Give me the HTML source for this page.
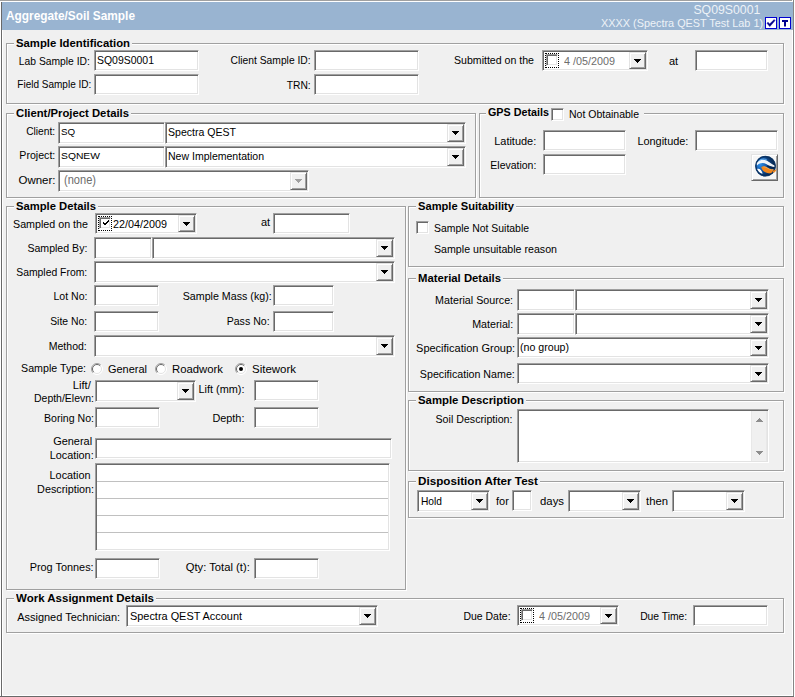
<!DOCTYPE html>
<html><head><meta charset="utf-8"><title>Aggregate/Soil Sample</title>
<style>
html,body{margin:0;padding:0}
body{width:795px;height:697px;position:relative;overflow:hidden;background:#f0f0f0;font-family:"Liberation Sans",Arial,sans-serif;font-size:11px;color:#000}
div,span,svg{position:absolute;box-sizing:border-box}
span{white-space:nowrap;line-height:13px}
.t{font-size:11px}
.b{font-size:11px;font-weight:bold}
.g{font-size:11px;color:#6d6d6d}
.v{font-size:11px}
.s{font-size:9.8px;line-height:12px}
.gt{font-size:12px;color:#6d6d6d}
.vt{font-size:11.5px}
.h1{font-size:12.5px;font-weight:bold;color:#fff;line-height:16px}
.h2{font-size:12px;color:#edf2f7;line-height:14px}
.h3{font-size:11px;color:#edf2f7;line-height:13px}
.gg{border:1px solid #a0a0a0}
.gw{border:1px solid #fff}
.tb{background:#fff;border:1px solid;border-color:#a0a0a0 #fff #fff #a0a0a0;box-shadow:inset 1px 1px 0 #696969,inset -1px -1px 0 #e3e3e3}
.bt{background:#f0f0f0;border:1px solid;border-color:#e3e3e3 #696969 #696969 #e3e3e3;box-shadow:inset 1px 1px 0 #fff,inset -1px -1px 0 #a0a0a0}
.cb{width:13px;height:13px;background:#fff;border:1px solid;border-color:#a0a0a0 #fff #fff #a0a0a0;box-shadow:inset 1px 1px 0 #696969,inset -1px -1px 0 #e3e3e3}

</style></head>
<body>
<div style="left:0px;top:0px;width:792px;height:1px;background:#a0a0a0"></div>
<div style="left:0px;top:1px;width:793px;height:1px;background:#fff"></div>
<div style="left:0px;top:1px;width:1px;height:696px;background:#fff"></div>
<div style="left:1px;top:2px;width:1px;height:695px;background:#696969"></div>
<div style="left:2px;top:30px;width:1px;height:666px;background:#fff"></div>
<div style="left:792px;top:0px;width:1px;height:696px;background:#fff"></div>
<div style="left:793px;top:0px;width:1px;height:697px;background:#868686"></div>
<div style="left:794px;top:0px;width:1px;height:697px;background:#fff"></div>
<div style="left:2px;top:695px;width:791px;height:1px;background:#fff"></div>
<div style="left:0px;top:696px;width:794px;height:1px;background:#696969"></div>
<div style="left:2px;top:2px;width:791px;height:28px;background:#99b4d1"></div>
<span class="h1" style="left:6px;top:8px;transform:scaleX(0.9474);transform-origin:left top;">Aggregate/Soil Sample</span>
<span class="h2" style="right:35px;top:3px;transform:scaleX(1.0246);transform-origin:right top;">SQ09S0001</span>
<span class="h3" style="right:32px;top:17px;transform:scaleX(0.9874);transform-origin:right top;">XXXX (Spectra QEST Test Lab 1)</span>
<svg style="left:765px;top:17px" width="12" height="12" viewBox="0 0 12 12"><rect x=".5" y=".5" width="11" height="11" fill="#fff" stroke="#0000d0"/><path d="M2 6.2L3 5.2L4.6 7L9.2 2.6L10 3.6L4.8 9.6z" fill="#00008c" stroke="#00008c" stroke-width=".5"/></svg>
<svg style="left:779px;top:17px" width="12" height="12" viewBox="0 0 12 12"><rect x=".5" y=".5" width="11" height="11" fill="#fff" stroke="#0000d0"/><path d="M3 3h6v2H7v4.5H5V5H3z" fill="#000090"/></svg>
<div class="gw" style="left:7px;top:44px;width:778px;height:61px"></div>
<div class="gg" style="left:6px;top:43px;width:778px;height:61px"></div>
<div style="left:14px;top:43px;width:118px;height:2px;background:#f0f0f0"></div>
<span class="b" style="left:16px;top:37px;transform:scaleX(1.0304);transform-origin:left top;">Sample Identification</span>
<span class="t" style="right:705px;top:55px;transform:scaleX(0.9363);transform-origin:right top;">Lab Sample ID:</span>
<div class="tb" style="left:94px;top:50px;width:105px;height:21px;"></div>
<span class="v" style="left:97px;top:54px;transform:scaleX(0.9510);transform-origin:left top;">SQ09S0001</span>
<span class="t" style="right:704px;top:78px;transform:scaleX(0.9101);transform-origin:right top;">Field Sample ID:</span>
<div class="tb" style="left:94px;top:74px;width:105px;height:21px;"></div>
<span class="t" style="right:484px;top:54px;transform:scaleX(0.9346);transform-origin:right top;">Client Sample ID:</span>
<div class="tb" style="left:314px;top:50px;width:105px;height:21px;"></div>
<span class="t" style="right:484px;top:79px;transform:scaleX(0.9349);transform-origin:right top;">TRN:</span>
<div class="tb" style="left:314px;top:74px;width:105px;height:21px;"></div>
<span class="t" style="left:454px;top:54px;transform:scaleX(0.9619);transform-origin:left top;">Submitted on the</span>
<div class="tb" style="left:542px;top:50px;width:106px;height:21px;"></div>
<div class="cb" style="left:546px;top:54px;width:12px;height:12px;"></div>
<div style="left:545px;top:53px;width:14px;height:15px;border:1px dotted #000"></div>
<span class="g" style="left:564px;top:55px;transform:scaleX(0.9808);transform-origin:left top;">4 /05/2009</span>
<div class="bt" style="left:629px;top:52px;width:17px;height:17px"></div>
<svg style="left:634px;top:59px" width="7" height="4" viewBox="0 0 7 4" shape-rendering="crispEdges"><path d="M0 0h7v1h-1v1h-1v1h-1v1h-1v-1h-1v-1h-1v-1h-1z" fill="#000"/></svg>
<span class="t" style="left:669px;top:55px;transform:scaleX(1.0000);transform-origin:left top;">at</span>
<div class="tb" style="left:695px;top:50px;width:73px;height:21px;"></div>
<div class="gw" style="left:7px;top:114px;width:470px;height:85px"></div>
<div class="gg" style="left:6px;top:113px;width:470px;height:85px"></div>
<div style="left:14px;top:113px;width:117px;height:2px;background:#f0f0f0"></div>
<span class="b" style="left:16px;top:107px;transform:scaleX(1.0268);transform-origin:left top;">Client/Project Details</span>
<span class="t" style="right:740px;top:125px;transform:scaleX(0.9299);transform-origin:right top;">Client:</span>
<div class="tb" style="left:58px;top:122px;width:107px;height:22px;"></div>
<span class="s" style="left:61px;top:126px;transform:scaleX(1.0000);transform-origin:left top;">SQ</span>
<div class="tb" style="left:165px;top:122px;width:301px;height:22px;"></div>
<div class="bt" style="left:447px;top:124px;width:17px;height:18px"></div>
<svg style="left:452px;top:131px" width="7" height="4" viewBox="0 0 7 4" shape-rendering="crispEdges"><path d="M0 0h7v1h-1v1h-1v1h-1v1h-1v-1h-1v-1h-1v-1h-1z" fill="#000"/></svg>
<span class="v" style="left:168px;top:126px;transform:scaleX(0.9588);transform-origin:left top;">Spectra QEST</span>
<span class="t" style="right:740px;top:149px;transform:scaleX(0.9652);transform-origin:right top;">Project:</span>
<div class="tb" style="left:58px;top:146px;width:107px;height:22px;"></div>
<span class="s" style="left:61px;top:150px;transform:scaleX(1.0536);transform-origin:left top;">SQNEW</span>
<div class="tb" style="left:165px;top:146px;width:301px;height:22px;"></div>
<div class="bt" style="left:447px;top:148px;width:17px;height:18px"></div>
<svg style="left:452px;top:155px" width="7" height="4" viewBox="0 0 7 4" shape-rendering="crispEdges"><path d="M0 0h7v1h-1v1h-1v1h-1v1h-1v-1h-1v-1h-1v-1h-1z" fill="#000"/></svg>
<span class="v" style="left:168px;top:150px;transform:scaleX(0.9573);transform-origin:left top;">New Implementation</span>
<span class="t" style="right:740px;top:174px;transform:scaleX(1.0432);transform-origin:right top;">Owner:</span>
<div class="tb" style="left:58px;top:170px;width:251px;height:22px;"></div>
<div class="bt" style="left:290px;top:172px;width:17px;height:18px"></div>
<svg style="left:295px;top:179px" width="7" height="4" viewBox="0 0 7 4" shape-rendering="crispEdges"><path d="M0 0h7v1h-1v1h-1v1h-1v1h-1v-1h-1v-1h-1v-1h-1z" fill="#a0a0a0"/></svg>
<span class="gt" style="left:64px;top:174px;transform:scaleX(0.9225);transform-origin:left top;">(none)</span>
<div class="gw" style="left:480px;top:114px;width:305px;height:85px"></div>
<div class="gg" style="left:479px;top:113px;width:305px;height:85px"></div>
<div style="left:486px;top:113px;width:158px;height:2px;background:#f0f0f0"></div>
<span class="b" style="left:488px;top:106px;transform:scaleX(0.9782);transform-origin:left top;">GPS Details</span>
<div class="cb" style="left:551px;top:108px;"></div>
<span class="t" style="left:569px;top:108px;transform:scaleX(0.9538);transform-origin:left top;">Not Obtainable</span>
<span class="t" style="right:259px;top:135px;transform:scaleX(0.9952);transform-origin:right top;">Latitude:</span>
<div class="tb" style="left:543px;top:130px;width:83px;height:21px;"></div>
<span class="t" style="right:107px;top:135px;transform:scaleX(0.9924);transform-origin:right top;">Longitude:</span>
<div class="tb" style="left:695px;top:130px;width:83px;height:21px;"></div>
<span class="t" style="right:259px;top:159px;transform:scaleX(0.9521);transform-origin:right top;">Elevation:</span>
<div class="tb" style="left:543px;top:154px;width:83px;height:21px;"></div>
<div class="bt" style="left:751px;top:154px;width:27px;height:27px;background:#f6f6f6"></div>
<svg style="left:755px;top:155px" width="22" height="22" viewBox="0 0 22 22">
<defs><radialGradient id="gl" cx="24%" cy="42%" r="70%"><stop offset="0" stop-color="#2f8fe8"/><stop offset=".4" stop-color="#145cae"/><stop offset=".75" stop-color="#0a366c"/><stop offset="1" stop-color="#06264c"/></radialGradient>
<clipPath id="gc"><circle cx="10.5" cy="11.1" r="10"/></clipPath></defs>
<circle cx="10.5" cy="11.1" r="10.2" fill="url(#gl)"/>
<g clip-path="url(#gc)">
<path d="M1 8.6C3.4 5.4 7.2 3.8 11.6 5.6C14.2 6.8 16.2 9.6 20.8 10.8L20.4 12.2C16.4 12 14 10.6 11.2 9C8 7.4 5 8 2 10.4z" fill="#fff" opacity=".93"/>
<path d="M3.4 6.2C6 4 9 3.6 11.6 4.6" fill="none" stroke="#7cc4ff" stroke-width="1.1" opacity=".75"/>
<path d="M1.6 14.2C3 13.4 4.4 13.6 5.8 15C6.8 16.2 7.2 17.4 7.6 18.8C5.4 18.2 3 16.8 1.6 14.2z" fill="#fff"/>
<path d="M6.2 12.3C7.5 10.9 9.5 11 11.5 12.2C14 13.8 17.5 15.4 21.5 14.2C21 16.8 18.5 18.6 15.6 18.5C12.6 18.3 10.2 17.4 8.4 16C7.4 15 6.6 13.8 6.2 12.3z" fill="#f0861c"/>
<path d="M8.5 12C10 11.7 11.5 12.4 13 13.4C15 14.6 18 15.2 21 14.4" fill="none" stroke="#ffb45a" stroke-width=".8"/>
<path d="M12.2 10.8C14.4 12.6 17 13.5 20.8 12.9" fill="none" stroke="#072650" stroke-width="1.5"/>
</g>
<circle cx="10.5" cy="11.1" r="9.7" fill="none" stroke="#08305e" stroke-width="1.5" opacity=".9"/>
<path d="M17 15.6C18.6 15.7 20.3 15.2 21.6 14.2C21.2 15.8 20.2 17 18.8 17.8z" fill="#f0861c"/>
</svg>
<div class="gw" style="left:7px;top:207px;width:400px;height:384px"></div>
<div class="gg" style="left:6px;top:206px;width:400px;height:384px"></div>
<div style="left:14px;top:206px;width:84px;height:2px;background:#f0f0f0"></div>
<span class="b" style="left:16px;top:200px;transform:scaleX(1.0222);transform-origin:left top;">Sample Details</span>
<span class="t" style="left:13px;top:218px;transform:scaleX(0.9732);transform-origin:left top;">Sampled on the</span>
<div class="tb" style="left:95px;top:213px;width:102px;height:21px;"></div>
<div style="left:98px;top:216px;width:14px;height:15px;border:1px dotted #000"></div>
<div class="cb" style="left:99px;top:217px;width:12px;height:12px;"></div>
<svg style="left:103px;top:220px" width="6" height="5" viewBox="0 0 6 5" shape-rendering="crispEdges" fill="#000"><rect x="0" y="2" width="1" height="2"/><rect x="1" y="3" width="1" height="2"/><rect x="2" y="3" width="1" height="2"/><rect x="3" y="2" width="1" height="2"/><rect x="4" y="1" width="1" height="2"/><rect x="5" y="0" width="1" height="2"/></svg>
<span class="v" style="left:113px;top:218px;transform:scaleX(0.9807);transform-origin:left top;">22/04/2009</span>
<div class="bt" style="left:178px;top:215px;width:17px;height:17px"></div>
<svg style="left:183px;top:222px" width="7" height="4" viewBox="0 0 7 4" shape-rendering="crispEdges"><path d="M0 0h7v1h-1v1h-1v1h-1v1h-1v-1h-1v-1h-1v-1h-1z" fill="#000"/></svg>
<span class="t" style="left:261px;top:216px;transform:scaleX(1.0000);transform-origin:left top;">at</span>
<div class="tb" style="left:273px;top:213px;width:77px;height:21px;"></div>
<span class="t" style="right:708px;top:242px;transform:scaleX(0.9619);transform-origin:right top;">Sampled By:</span>
<div class="tb" style="left:94px;top:237px;width:58px;height:22px;"></div>
<div class="tb" style="left:152px;top:237px;width:243px;height:22px;"></div>
<div class="bt" style="left:376px;top:239px;width:17px;height:18px"></div>
<svg style="left:381px;top:246px" width="7" height="4" viewBox="0 0 7 4" shape-rendering="crispEdges"><path d="M0 0h7v1h-1v1h-1v1h-1v1h-1v-1h-1v-1h-1v-1h-1z" fill="#000"/></svg>
<span class="t" style="right:708px;top:266px;transform:scaleX(0.9441);transform-origin:right top;">Sampled From:</span>
<div class="tb" style="left:94px;top:261px;width:301px;height:22px;"></div>
<div class="bt" style="left:376px;top:263px;width:17px;height:18px"></div>
<svg style="left:381px;top:270px" width="7" height="4" viewBox="0 0 7 4" shape-rendering="crispEdges"><path d="M0 0h7v1h-1v1h-1v1h-1v1h-1v-1h-1v-1h-1v-1h-1z" fill="#000"/></svg>
<span class="t" style="right:708px;top:290px;transform:scaleX(0.9586);transform-origin:right top;">Lot No:</span>
<div class="tb" style="left:94px;top:285px;width:65px;height:21px;"></div>
<span class="t" style="right:523px;top:290px;transform:scaleX(0.9705);transform-origin:right top;">Sample Mass (kg):</span>
<div class="tb" style="left:273px;top:285px;width:61px;height:21px;"></div>
<span class="t" style="right:708px;top:315px;transform:scaleX(0.9453);transform-origin:right top;">Site No:</span>
<div class="tb" style="left:94px;top:311px;width:65px;height:21px;"></div>
<span class="t" style="right:525px;top:315px;transform:scaleX(0.9632);transform-origin:right top;">Pass No:</span>
<div class="tb" style="left:273px;top:311px;width:61px;height:21px;"></div>
<span class="t" style="right:708px;top:340px;transform:scaleX(0.9560);transform-origin:right top;">Method:</span>
<div class="tb" style="left:94px;top:335px;width:301px;height:22px;"></div>
<div class="bt" style="left:376px;top:337px;width:17px;height:18px"></div>
<svg style="left:381px;top:344px" width="7" height="4" viewBox="0 0 7 4" shape-rendering="crispEdges"><path d="M0 0h7v1h-1v1h-1v1h-1v1h-1v-1h-1v-1h-1v-1h-1z" fill="#000"/></svg>
<span class="t" style="right:709px;top:362px;transform:scaleX(0.9692);transform-origin:right top;">Sample Type:</span>
<svg class="rd" style="left:91px;top:363px" width="12" height="12" viewBox="0 0 12 12"><circle cx="6" cy="6" r="5.5" fill="#fff"/><path d="M2.1 9.9A5.5 5.5 0 0 1 9.9 2.1" fill="none" stroke="#a0a0a0" stroke-width="1"/><path d="M2.8 9.2A4.5 4.5 0 0 1 9.2 2.8" fill="none" stroke="#696969" stroke-width="1"/><path d="M9.9 2.1A5.5 5.5 0 0 1 2.1 9.9" fill="none" stroke="#fff" stroke-width="1"/><path d="M9.2 2.8A4.5 4.5 0 0 1 2.8 9.2" fill="none" stroke="#e3e3e3" stroke-width="1"/></svg>
<span class="t" style="left:108px;top:363px;transform:scaleX(0.9964);transform-origin:left top;">General</span>
<svg class="rd" style="left:155px;top:363px" width="12" height="12" viewBox="0 0 12 12"><circle cx="6" cy="6" r="5.5" fill="#fff"/><path d="M2.1 9.9A5.5 5.5 0 0 1 9.9 2.1" fill="none" stroke="#a0a0a0" stroke-width="1"/><path d="M2.8 9.2A4.5 4.5 0 0 1 9.2 2.8" fill="none" stroke="#696969" stroke-width="1"/><path d="M9.9 2.1A5.5 5.5 0 0 1 2.1 9.9" fill="none" stroke="#fff" stroke-width="1"/><path d="M9.2 2.8A4.5 4.5 0 0 1 2.8 9.2" fill="none" stroke="#e3e3e3" stroke-width="1"/></svg>
<span class="t" style="left:172px;top:363px;transform:scaleX(1.0297);transform-origin:left top;">Roadwork</span>
<svg class="rd" style="left:235px;top:363px" width="12" height="12" viewBox="0 0 12 12"><circle cx="6" cy="6" r="5.5" fill="#fff"/><path d="M2.1 9.9A5.5 5.5 0 0 1 9.9 2.1" fill="none" stroke="#a0a0a0" stroke-width="1"/><path d="M2.8 9.2A4.5 4.5 0 0 1 9.2 2.8" fill="none" stroke="#696969" stroke-width="1"/><path d="M9.9 2.1A5.5 5.5 0 0 1 2.1 9.9" fill="none" stroke="#fff" stroke-width="1"/><path d="M9.2 2.8A4.5 4.5 0 0 1 2.8 9.2" fill="none" stroke="#e3e3e3" stroke-width="1"/><circle cx="6" cy="6" r="2" fill="#000"/></svg>
<span class="t" style="left:252px;top:363px;transform:scaleX(1.0430);transform-origin:left top;">Sitework</span>
<span class="t" style="right:704px;top:379px;transform:scaleX(1.0150);transform-origin:right top;">Lift/</span>
<span class="t" style="right:701px;top:392px;transform:scaleX(0.9526);transform-origin:right top;">Depth/Elevn:</span>
<div class="tb" style="left:95px;top:380px;width:101px;height:22px;"></div>
<div class="bt" style="left:177px;top:382px;width:17px;height:18px"></div>
<svg style="left:182px;top:389px" width="7" height="4" viewBox="0 0 7 4" shape-rendering="crispEdges"><path d="M0 0h7v1h-1v1h-1v1h-1v1h-1v-1h-1v-1h-1v-1h-1z" fill="#000"/></svg>
<span class="t" style="right:551px;top:383px;transform:scaleX(0.9902);transform-origin:right top;">Lift (mm):</span>
<div class="tb" style="left:254px;top:380px;width:65px;height:21px;"></div>
<span class="t" style="right:701px;top:412px;transform:scaleX(0.9618);transform-origin:right top;">Boring No:</span>
<div class="tb" style="left:95px;top:407px;width:65px;height:21px;"></div>
<span class="t" style="right:551px;top:412px;transform:scaleX(0.9870);transform-origin:right top;">Depth:</span>
<div class="tb" style="left:254px;top:407px;width:65px;height:21px;"></div>
<span class="t" style="right:703px;top:435px;transform:scaleX(0.9964);transform-origin:right top;">General</span>
<span class="t" style="right:701px;top:449px;transform:scaleX(0.9853);transform-origin:right top;">Location:</span>
<div class="tb" style="left:95px;top:438px;width:297px;height:21px;"></div>
<span class="t" style="right:704px;top:469px;transform:scaleX(0.9857);transform-origin:right top;">Location</span>
<span class="t" style="right:701px;top:483px;transform:scaleX(0.9814);transform-origin:right top;">Description:</span>
<div class="tb" style="left:95px;top:463px;width:295px;height:88px;"></div>
<div style="left:97px;top:481px;width:291px;height:1px;background:#c0c0c0"></div>
<div style="left:97px;top:498px;width:291px;height:1px;background:#c0c0c0"></div>
<div style="left:97px;top:515px;width:291px;height:1px;background:#c0c0c0"></div>
<div style="left:97px;top:532px;width:291px;height:1px;background:#c0c0c0"></div>
<span class="t" style="right:701px;top:561px;transform:scaleX(0.9903);transform-origin:right top;">Prog Tonnes:</span>
<div class="tb" style="left:95px;top:558px;width:65px;height:21px;"></div>
<span class="t" style="right:545px;top:561px;transform:scaleX(1.0197);transform-origin:right top;">Qty: Total (t):</span>
<div class="tb" style="left:254px;top:558px;width:65px;height:21px;"></div>
<div class="gw" style="left:409px;top:207px;width:376px;height:61px"></div>
<div class="gg" style="left:408px;top:206px;width:376px;height:61px"></div>
<div style="left:416px;top:206px;width:100px;height:2px;background:#f0f0f0"></div>
<span class="b" style="left:418px;top:200px;transform:scaleX(1.0132);transform-origin:left top;">Sample Suitability</span>
<div class="cb" style="left:416px;top:221px;"></div>
<span class="t" style="left:434px;top:222px;transform:scaleX(0.9473);transform-origin:left top;">Sample Not Suitable</span>
<span class="t" style="left:434px;top:243px;transform:scaleX(0.9670);transform-origin:left top;">Sample unsuitable reason</span>
<div class="gw" style="left:409px;top:279px;width:376px;height:114px"></div>
<div class="gg" style="left:408px;top:278px;width:376px;height:114px"></div>
<div style="left:416px;top:278px;width:87px;height:2px;background:#f0f0f0"></div>
<span class="b" style="left:418px;top:272px;transform:scaleX(1.0285);transform-origin:left top;">Material Details</span>
<span class="t" style="right:282px;top:294px;transform:scaleX(0.9739);transform-origin:right top;">Material Source:</span>
<div class="tb" style="left:517px;top:289px;width:58px;height:22px;"></div>
<div class="tb" style="left:575px;top:289px;width:194px;height:22px;"></div>
<div class="bt" style="left:750px;top:291px;width:17px;height:18px"></div>
<svg style="left:755px;top:298px" width="7" height="4" viewBox="0 0 7 4" shape-rendering="crispEdges"><path d="M0 0h7v1h-1v1h-1v1h-1v1h-1v-1h-1v-1h-1v-1h-1z" fill="#000"/></svg>
<span class="t" style="right:282px;top:318px;transform:scaleX(0.9719);transform-origin:right top;">Material:</span>
<div class="tb" style="left:517px;top:313px;width:58px;height:22px;"></div>
<div class="tb" style="left:575px;top:313px;width:194px;height:22px;"></div>
<div class="bt" style="left:750px;top:315px;width:17px;height:18px"></div>
<svg style="left:755px;top:322px" width="7" height="4" viewBox="0 0 7 4" shape-rendering="crispEdges"><path d="M0 0h7v1h-1v1h-1v1h-1v1h-1v-1h-1v-1h-1v-1h-1z" fill="#000"/></svg>
<span class="t" style="right:280px;top:342px;transform:scaleX(0.9994);transform-origin:right top;">Specification Group:</span>
<div class="tb" style="left:517px;top:337px;width:252px;height:21px;"></div>
<div class="bt" style="left:750px;top:339px;width:17px;height:17px"></div>
<svg style="left:755px;top:346px" width="7" height="4" viewBox="0 0 7 4" shape-rendering="crispEdges"><path d="M0 0h7v1h-1v1h-1v1h-1v1h-1v-1h-1v-1h-1v-1h-1z" fill="#000"/></svg>
<span class="vt" style="left:520px;top:341px;transform:scaleX(0.9234);transform-origin:left top;">(no group)</span>
<span class="t" style="right:280px;top:368px;transform:scaleX(0.9711);transform-origin:right top;">Specification Name:</span>
<div class="tb" style="left:517px;top:363px;width:252px;height:21px;"></div>
<div class="bt" style="left:750px;top:365px;width:17px;height:17px"></div>
<svg style="left:755px;top:372px" width="7" height="4" viewBox="0 0 7 4" shape-rendering="crispEdges"><path d="M0 0h7v1h-1v1h-1v1h-1v1h-1v-1h-1v-1h-1v-1h-1z" fill="#000"/></svg>
<div class="gw" style="left:409px;top:401px;width:376px;height:71px"></div>
<div class="gg" style="left:408px;top:400px;width:376px;height:71px"></div>
<div style="left:416px;top:400px;width:110px;height:2px;background:#f0f0f0"></div>
<span class="b" style="left:418px;top:394px;transform:scaleX(1.0321);transform-origin:left top;">Sample Description</span>
<span class="t" style="right:283px;top:413px;transform:scaleX(0.9687);transform-origin:right top;">Soil Description:</span>
<div class="tb" style="left:517px;top:409px;width:252px;height:54px;"></div>
<div style="left:751px;top:411px;width:16px;height:50px;background:#f0f0f0;border-left:1px solid #e8e8e8;border-right:1px solid #e8e8e8"></div>
<svg style="left:756px;top:418px" width="7" height="4" viewBox="0 0 7 4" shape-rendering="crispEdges"><path d="M3 0h1v1h1v1h1v1h1v1h-7v-1h1v-1h1v-1h1z" fill="#8e8e8e"/></svg>
<svg style="left:756px;top:451px" width="7" height="4" viewBox="0 0 7 4" shape-rendering="crispEdges"><path d="M0 0h7v1h-1v1h-1v1h-1v1h-1v-1h-1v-1h-1v-1h-1z" fill="#8e8e8e"/></svg>
<div class="gw" style="left:409px;top:482px;width:376px;height:37px"></div>
<div class="gg" style="left:408px;top:481px;width:376px;height:37px"></div>
<div style="left:416px;top:481px;width:124px;height:2px;background:#f0f0f0"></div>
<span class="b" style="left:418px;top:475px;transform:scaleX(1.0614);transform-origin:left top;">Disposition After Test</span>
<div class="tb" style="left:417px;top:490px;width:73px;height:22px;"></div>
<div class="bt" style="left:471px;top:492px;width:17px;height:18px"></div>
<svg style="left:476px;top:499px" width="7" height="4" viewBox="0 0 7 4" shape-rendering="crispEdges"><path d="M0 0h7v1h-1v1h-1v1h-1v1h-1v-1h-1v-1h-1v-1h-1z" fill="#000"/></svg>
<span class="v" style="left:421px;top:495px;transform:scaleX(0.9282);transform-origin:left top;">Hold</span>
<span class="t" style="left:496px;top:495px;transform:scaleX(1.0000);transform-origin:left top;">for</span>
<div class="tb" style="left:512px;top:490px;width:20px;height:21px;"></div>
<span class="t" style="left:540px;top:495px;transform:scaleX(1.0323);transform-origin:left top;">days</span>
<div class="tb" style="left:568px;top:490px;width:73px;height:22px;"></div>
<div class="bt" style="left:622px;top:492px;width:17px;height:18px"></div>
<svg style="left:627px;top:499px" width="7" height="4" viewBox="0 0 7 4" shape-rendering="crispEdges"><path d="M0 0h7v1h-1v1h-1v1h-1v1h-1v-1h-1v-1h-1v-1h-1z" fill="#000"/></svg>
<span class="t" style="left:646px;top:495px;transform:scaleX(1.0270);transform-origin:left top;">then</span>
<div class="tb" style="left:672px;top:490px;width:73px;height:22px;"></div>
<div class="bt" style="left:726px;top:492px;width:17px;height:18px"></div>
<svg style="left:731px;top:499px" width="7" height="4" viewBox="0 0 7 4" shape-rendering="crispEdges"><path d="M0 0h7v1h-1v1h-1v1h-1v1h-1v-1h-1v-1h-1v-1h-1z" fill="#000"/></svg>
<div class="gw" style="left:7px;top:599px;width:778px;height:35px"></div>
<div class="gg" style="left:6px;top:598px;width:778px;height:35px"></div>
<div style="left:14px;top:598px;width:142px;height:2px;background:#f0f0f0"></div>
<span class="b" style="left:16px;top:592px;transform:scaleX(1.0451);transform-origin:left top;">Work Assignment Details</span>
<span class="t" style="right:675px;top:611px;transform:scaleX(0.9985);transform-origin:right top;">Assigned Technician:</span>
<div class="tb" style="left:126px;top:605px;width:252px;height:22px;"></div>
<div class="bt" style="left:359px;top:607px;width:17px;height:18px"></div>
<svg style="left:364px;top:614px" width="7" height="4" viewBox="0 0 7 4" shape-rendering="crispEdges"><path d="M0 0h7v1h-1v1h-1v1h-1v1h-1v-1h-1v-1h-1v-1h-1z" fill="#000"/></svg>
<span class="v" style="left:130px;top:610px;transform:scaleX(0.9918);transform-origin:left top;">Spectra QEST Account</span>
<span class="t" style="right:284px;top:610px;transform:scaleX(0.9489);transform-origin:right top;">Due Date:</span>
<div class="tb" style="left:517px;top:605px;width:102px;height:21px;"></div>
<div class="cb" style="left:521px;top:609px;width:12px;height:12px;"></div>
<div style="left:520px;top:608px;width:14px;height:15px;border:1px dotted #000"></div>
<span class="g" style="left:539px;top:610px;transform:scaleX(0.9808);transform-origin:left top;">4 /05/2009</span>
<div class="bt" style="left:600px;top:607px;width:17px;height:17px"></div>
<svg style="left:605px;top:614px" width="7" height="4" viewBox="0 0 7 4" shape-rendering="crispEdges"><path d="M0 0h7v1h-1v1h-1v1h-1v1h-1v-1h-1v-1h-1v-1h-1z" fill="#000"/></svg>
<span class="t" style="right:108px;top:610px;transform:scaleX(0.9374);transform-origin:right top;">Due Time:</span>
<div class="tb" style="left:693px;top:605px;width:75px;height:21px;"></div>
</body></html>
